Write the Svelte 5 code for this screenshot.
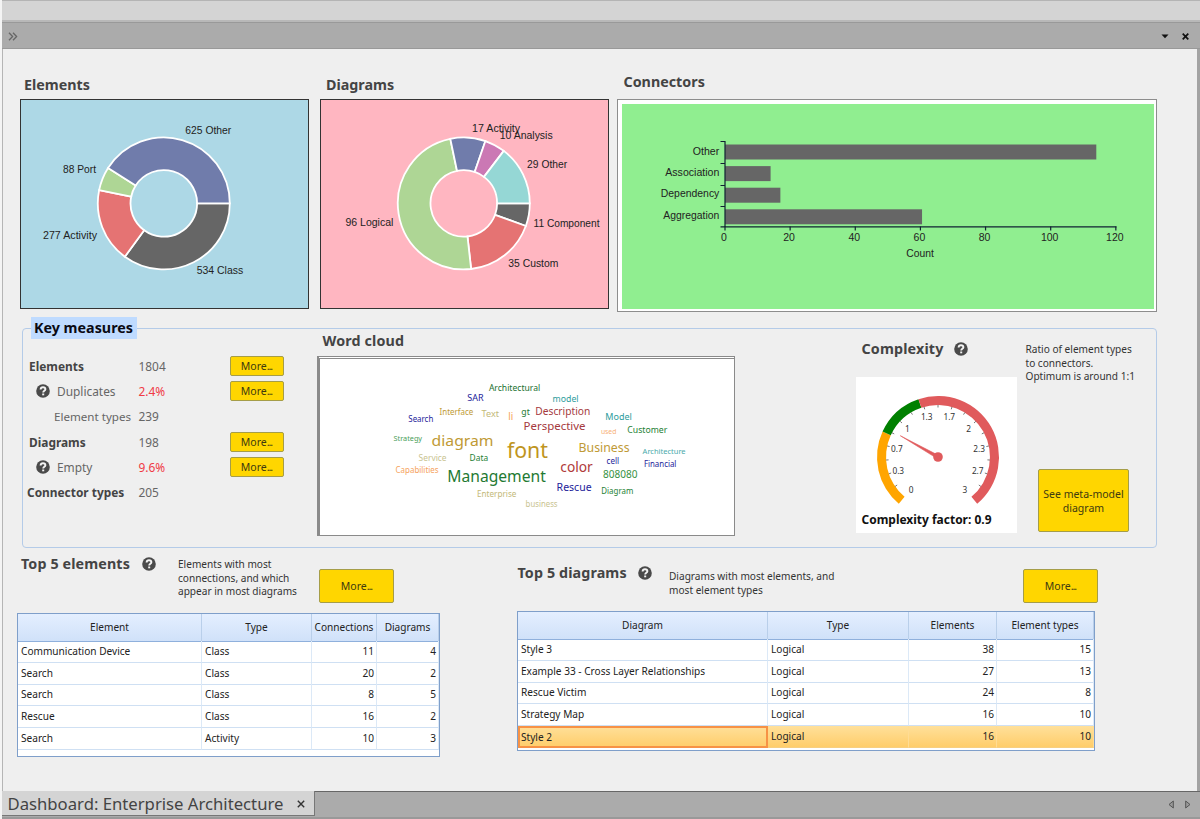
<script lang="ts">
  interface Slice {
    label: string;
    value: number;
    color: string;
    x: number;
    y: number;
    w: number;
  }

  const elementSlices: Slice[] = [
    { label: "Class", value: 534, color: "#666666", x: 175.7, y: 173.7, w: 46.5 },
    { label: "Activity", value: 277, color: "#e57373", x: 22, y: 139, w: 54 },
    { label: "Port", value: 88, color: "#aed695", x: 42, y: 73, w: 33 },
    { label: "Other", value: 625, color: "#707cab", x: 164.3, y: 34.3, w: 46 },
  ];

  const diagramSlices: Slice[] = [
    { label: "Component", value: 11, color: "#666666", x: 212.5, y: 126.7, w: 66 },
    { label: "Custom", value: 35, color: "#e57373", x: 187.3, y: 167.3, w: 50 },
    { label: "Logical", value: 96, color: "#aed695", x: 24.4, y: 125.5, w: 48 },
    { label: "Activity", value: 17, color: "#707cab", x: 151.1, y: 31.5, w: 48 },
    { label: "Analysis", value: 10, color: "#cb78b4", x: 178.7, y: 39.3, w: 53 },
    { label: "Other", value: 29, color: "#95d7d5", x: 206.1, y: 68.3, w: 40 },
  ];

  const connectors = [
    { label: "Other", value: 114, w: 26.5 },
    { label: "Association", value: 14, w: 54 },
    { label: "Dependency", value: 17, w: 58.5 },
    { label: "Aggregation", value: 60.5, w: 56 },
  ];

  const measures = [
    { name: "Elements", value: "1804", kind: "main", more: true },
    { name: "Duplicates", value: "2.4%", kind: "hinted", more: true },
    { name: "Element types", value: "239", kind: "sub", more: false },
    { name: "Diagrams", value: "198", kind: "main", more: true },
    { name: "Empty", value: "9.6%", kind: "hinted", more: true },
    { name: "Connector types", value: "205", kind: "main last", more: false },
  ];

  // text, x, baseline, width, size, color
  const words: [string, number, number, number, number, string][] = [
    ["Architectural", 169.3, 31.7, 51.3, 8.5, "#1b7030"],
    ["SAR", 147.7, 42.3, 16.3, 8.7, "#23239a"],
    ["model", 233, 42.7, 26, 8.7, "#2c9c9c"],
    ["Search", 88.7, 62.7, 25, 8.5, "#23239a"],
    ["Interface", 120, 55.7, 33.7, 8.2, "#c09a35"],
    ["Text", 162, 58.3, 17.5, 9.5, "#c3b978"],
    ["li", 188.7, 61.3, 5, 10, "#f6a25c"],
    ["gt", 201.7, 55.5, 8.5, 9, "#1f7a33"],
    ["Description", 215.7, 56.3, 55, 10.3, "#a53a40"],
    ["Perspective", 204, 70.7, 62, 11.2, "#a53a40"],
    ["Model", 285.7, 60.7, 26.5, 9, "#2c9c9c"],
    ["used", 281.3, 74.5, 15.5, 7.4, "#f7b078"],
    ["Customer", 307.7, 74.3, 40, 9, "#257f35"],
    ["Strategy", 74, 82, 28.5, 7.4, "#4aa05a"],
    ["diagram", 112, 87.3, 62, 15.3, "#c09a35"],
    ["font", 187.3, 98.7, 41, 21, "#bf9522"],
    ["Business", 259, 93.3, 51, 13.4, "#c09a35"],
    ["Architecture", 323, 94.7, 43, 7.6, "#48aaaa"],
    ["Service", 99, 102.3, 28, 8.5, "#c9c390"],
    ["Data", 150, 101.7, 18.5, 8.5, "#257f35"],
    ["color", 240.7, 112.7, 32.5, 13.6, "#b03a3a"],
    ["cell", 287, 105.3, 12.5, 8.4, "#23239a"],
    ["Financial", 324.3, 107.7, 32.5, 8.6, "#23239a"],
    ["Capabilities", 76, 114.3, 43, 8.5, "#f6a25c"],
    ["Management", 127.7, 123.3, 98.5, 16.8, "#1f7a33"],
    ["808080", 283.3, 119.3, 34.5, 10.2, "#36913f"],
    ["Rescue", 237, 132, 35, 11, "#23239a"],
    ["Diagram", 281.7, 134.7, 32, 8.5, "#257f35"],
    ["Enterprise", 157.3, 138, 39.5, 8.5, "#c3b978"],
    ["business", 206, 147.7, 32, 8.5, "#c9c390"],
  ];

  const topElements = [
    ["Communication Device", "Class", 11, 4],
    ["Search", "Class", 20, 2],
    ["Search", "Class", 8, 5],
    ["Rescue", "Class", 16, 2],
    ["Search", "Activity", 10, 3],
  ];

  const topDiagrams = [
    ["Style 3", "Logical", 38, 15],
    ["Example 33 - Cross Layer Relationships", "Logical", 27, 13],
    ["Rescue Victim", "Logical", 24, 8],
    ["Strategy Map", "Logical", 16, 10],
    ["Style 2", "Logical", 16, 10],
  ];

  const gaugeLabels = ["0", "0.3", "0.7", "1", "1.3", "1.7", "2", "2.3", "2.7", "3"];
  const gaugeTicks = Array.from({ length: 17 }, (_, i) => gaugeAngle((i + 1) / 6));

  // degrees run clockwise from three o'clock
  function point(cx: number, cy: number, r: number, deg: number) {
    const a = (deg * Math.PI) / 180;
    return { x: cx + r * Math.cos(a), y: cy + r * Math.sin(a) };
  }

  function ring(cx: number, cy: number, r1: number, r2: number, from: number, to: number) {
    const a = point(cx, cy, r2, from);
    const b = point(cx, cy, r2, to);
    const c = point(cx, cy, r1, to);
    const d = point(cx, cy, r1, from);
    const large = to - from > 180 ? 1 : 0;
    return `M${a.x} ${a.y}A${r2} ${r2} 0 ${large} 1 ${b.x} ${b.y}L${c.x} ${c.y}A${r1} ${r1} 0 ${large} 0 ${d.x} ${d.y}Z`;
  }

  function donut(slices: Slice[]) {
    const total = slices.reduce((sum, s) => sum + s.value, 0);
    let start = 0;
    return slices.map((s) => {
      const end = start + (s.value / total) * 360;
      const d = ring(142.8, 103.4, 33.3, 66, start, end);
      start = end;
      return { ...s, d };
    });
  }

  function gaugeAngle(value: number) {
    return 130 + (value / 3) * 280;
  }
</script>

{#snippet help()}
  <svg class="help" viewBox="0 0 14 14">
    <circle cx="7" cy="7" r="6.8" fill="#4a4a4a" />
    <path d="M4.6 5.5C4.7 3.9 5.7 3.2 7 3.2c1.5 0 2.4.8 2.4 2 0 1.6-2.2 1.6-2.2 3.3" fill="none" stroke="#f4f4f4" stroke-width="1.9" />
    <rect x="6.2" y="9.5" width="2" height="1.8" fill="#f4f4f4" />
  </svg>
{/snippet}

{#snippet donutChart(slices: Slice[])}
  <svg class="chart" viewBox="0 0 287 208">
    {#each donut(slices) as s}
      <path d={s.d} fill={s.color} stroke="#fff" stroke-width="1.8" />
    {/each}
    {#each slices as s}
      <text x={s.x} y={s.y} textLength={s.w} lengthAdjust="spacingAndGlyphs">{s.value} {s.label}</text>
    {/each}
  </svg>
{/snippet}

{#snippet table(heads: string[], rows: (string | number)[][], kind: string, selected: number)}
  <div class="table {kind}">
    <div class="row head">
      {#each heads as h}<span>{h}</span>{/each}
    </div>
    {#each rows as row, i}
      <div class="row" class:selected={i === selected}>
        {#each row as cell}
          <span class:num={typeof cell === "number"}>{cell}</span>
        {/each}
      </div>
    {/each}
  </div>
{/snippet}

<div class="window">
  <div class="strip"></div>
  <header>
    <svg class="chevrons" width="10" height="9" viewBox="0 0 10 9">
      <path d="M1 .7 4.6 4.5 1 8.3M5 .7 8.6 4.5 5 8.3" fill="none" stroke="#666" stroke-width="1.3" />
    </svg>
    <svg width="8" height="5" viewBox="0 0 8 5"><path d="M.5.5h7L4 4.3z" fill="#111" /></svg>
    <svg width="7" height="7" viewBox="0 0 7 7"><path d="M.7.7 6.3 6.3M6.3.7.7 6.3" stroke="#111" stroke-width="1.7" /></svg>
  </header>

  <main>
    <div class="charts">
      <section>
        <h2>Elements</h2>
        <div class="panel blue">{@render donutChart(elementSlices)}</div>
      </section>
      <section>
        <h2>Diagrams</h2>
        <div class="panel pink">{@render donutChart(diagramSlices)}</div>
      </section>
      <section class="connectors">
        <h2>Connectors</h2>
        <div class="panel framed">
          <svg class="chart green" viewBox="0 0 532 205">
            {#each connectors as c, i}
              <rect x="103" y={40.5 + i * 21.6} width={c.value * 3.257} height="15" fill="#666" />
              <text x={97.3 - c.w} y={50.5 + i * 21.4} textLength={c.w} lengthAdjust="spacingAndGlyphs">{c.label}</text>
            {/each}
            <path d="M98.5 37.5h4.5V123.5M98.5 59.5h4.5M98.5 81.5h4.5M98.5 102.5h4.5M98.5 122.8H494.5" class="axis" />
            {#each [0, 20, 40, 60, 80, 100, 120] as t}
              <path d="M{103 + t * 3.257} 122.5v4" class="axis" />
              <text x={102 + t * 3.257} y="137" text-anchor="middle" class="tick">{t}</text>
            {/each}
            <text x="284.3" y="153.3" textLength="27.5" lengthAdjust="spacingAndGlyphs">Count</text>
          </svg>
        </div>
      </section>
    </div>

    <div class="key">
      <h2 class="legend">Key measures</h2>
      <div class="measures">
        {#each measures as m}
          <div class="measure {m.kind}">
            <span class="name">
              {#if m.kind === "hinted"}{@render help()}{/if}
              {m.name}
            </span>
            <span class="value">{m.value}</span>
            {#if m.more}<button>More<i>...</i></button>{/if}
          </div>
        {/each}
      </div>

      <div class="cloud">
        <h2>Word cloud</h2>
        <svg viewBox="0 0 414 176">
          {#each words as [text, x, y, w, size, color]}
            <text x={x - 0.4} {y} textLength={w} lengthAdjust="spacingAndGlyphs" font-size={size} fill={color}>{text}</text>
          {/each}
        </svg>
      </div>

      <div class="complexity">
        <h2>Complexity {@render help()}</h2>
        <div class="gauge">
          <svg viewBox="0 0 161 156">
            <path d={ring(82, 80, 52, 61, gaugeAngle(0), gaugeAngle(0.8))} fill="#ffa500" />
            <path d={ring(82, 80, 52, 61, gaugeAngle(0.8), gaugeAngle(1.3))} fill="#008000" />
            <path d={ring(82, 80, 52, 61, gaugeAngle(1.3), gaugeAngle(3))} fill="#e05a5c" />
            {#each gaugeTicks as deg}
              {@const a = point(82, 80, 52, deg)}
              {@const b = point(82, 80, 49.5, deg)}
              <line x1={a.x} y1={a.y} x2={b.x} y2={b.y} stroke="#555" stroke-width="0.8" />
            {/each}
            {#each gaugeLabels as label, i}
              {@const p = point(82, 80, 42, gaugeAngle(i / 3))}
              <text x={p.x} y={p.y + 3.4} text-anchor="middle">{label}</text>
            {/each}
            <path d="M44.3 58.7 82.9 78.6 81.3 81.6z" fill="#e05a5c" stroke="#e05a5c" stroke-width="0.6" />
            <circle cx="82" cy="80" r="4.8" fill="#e05a5c" />
            <text x="5.5" y="146.5" class="factor" textLength="130" lengthAdjust="spacingAndGlyphs">Complexity factor: 0.9</text>
          </svg>
        </div>
      </div>

      <div class="side">
        <p>Ratio of element types<br />to connectors.<br />Optimum is around 1:1</p>
        <button>See meta-model<br />diagram</button>
      </div>
    </div>

    <div class="tops">
      <section class="top-elements">
        <div class="caption">
          <h2>Top 5 elements {@render help()}</h2>
          <p>Elements with most<br />connections, and which<br />appear in most diagrams</p>
          <button>More<i>...</i></button>
        </div>
        {@render table(["Element", "Type", "Connections", "Diagrams"], topElements, "elements", -1)}
      </section>
      <section class="top-diagrams">
        <div class="caption">
          <h2>Top 5 diagrams {@render help()}</h2>
          <p>Diagrams with most elements, and<br />most element types</p>
          <button>More<i>...</i></button>
        </div>
        {@render table(["Diagram", "Type", "Elements", "Element types"], topDiagrams, "diagrams", 4)}
      </section>
    </div>
  </main>

  <footer>
    <div class="tab">
      <span>Dashboard: Enterprise Architecture</span>
      <svg width="8" height="8" viewBox="0 0 8 8"><path d="M.8.8 7.2 7.2M7.2.8.8 7.2" stroke="#333" stroke-width="1.4" /></svg>
    </div>
    <div class="arrows">
      <svg width="6" height="9" viewBox="0 0 6 9"><path d="M5.3 1v7L1 4.5z" fill="#999" stroke="#555" /></svg>
      <svg width="6" height="9" viewBox="0 0 6 9"><path d="M.7 1v7L5 4.5z" fill="#999" stroke="#555" /></svg>
    </div>
  </footer>
</div>

<style>
  :global(body) {
    background: #efefef;
  }

  .window {
    display: flex;
    flex-direction: column;
    box-sizing: border-box;
    width: 1200px;
    height: 819px;
    overflow: hidden;
    padding-left: 2px;
    background: #f4f4f4;
    font-family: "Noto Sans", "Open Sans", sans-serif;
    color: #333;
  }

  .strip {
    box-sizing: border-box;
    height: 22px;
    border-top: 1px solid #b4b4b4;
    border-bottom: 2px solid #b8b8b8;
    background: #d4d4d4;
  }

  header {
    display: flex;
    align-items: center;
    gap: 13px;
    box-sizing: border-box;
    height: 27px;
    padding: 2px 11px 0 6px;
    border-top: 1px solid #999;
    border-bottom: 1px solid #999;
    background: #ababab;
  }

  .chevrons {
    margin-right: auto;
  }

  main {
    display: flex;
    flex-direction: column;
    box-sizing: border-box;
    height: 742px;
    border-left: 1px solid #b5b5b5;
    border-right: 3px solid #a3a3a3;
    background: #efefef;
  }

  h2 {
    margin: 0;
    font-size: 14.3px;
    line-height: 20px;
    font-weight: 700;
    color: #444;
    white-space: nowrap;
  }

  p {
    margin: 0;
    font-size: 10.1px;
    line-height: 13.7px;
    white-space: nowrap;
  }

  svg {
    display: block;
  }

  .help {
    flex: none;
    width: 14px;
    height: 14px;
  }

  button {
    box-sizing: border-box;
    padding: 0;
    border: 1px solid #a59d48;
    border-radius: 2px;
    background: #ffd600;
    color: #403a10;
    font: 10.5px/14px "Noto Sans", sans-serif;
  }

  button i {
    font-style: normal;
    letter-spacing: -1px;
  }

  /* charts */
  .charts {
    display: flex;
    box-sizing: border-box;
    height: 268px;
    padding: 26px 0 0 17px;
  }

  .charts section {
    width: 300px;
  }

  .charts h2 {
    height: 24px;
    padding-left: 4px;
  }

  .charts section:nth-child(2) h2 {
    padding-left: 6px;
  }

  .charts .connectors {
    width: 540px;
    margin: -3px 0 0 -3px;
  }

  .charts .connectors h2 {
    height: 27px;
    padding-left: 6.5px;
  }

  .panel {
    box-sizing: border-box;
    width: 289px;
    height: 210px;
    border: 1px solid #333;
  }

  .blue {
    background: #add8e6;
  }

  .pink {
    background: #ffb6c1;
  }

  .framed {
    width: 540px;
    height: 213px;
    padding: 4px 2px 2px 4px;
    border-color: #8d8d8d;
    background: #fff;
  }

  .chart {
    width: 100%;
    height: 100%;
    font: 10.7px "Liberation Sans", Arial, sans-serif;
    fill: #222;
  }

  .green {
    background: #90ee90;
  }

  .axis {
    fill: none;
    stroke: #123;
    stroke-width: 1.2;
  }

  .tick {
    font-size: 10.5px;
  }

  /* key measures */
  .key {
    display: flex;
    position: relative;
    box-sizing: border-box;
    width: 1135px;
    height: 220px;
    margin: 11px 0 0 19px;
    border: 1px solid #b4cbe8;
    border-radius: 4px;
  }

  .legend {
    position: absolute;
    left: 8px;
    top: -12px;
    box-sizing: border-box;
    width: 106px;
    height: 22px;
    padding: 1px 3px;
    background: #bfdbff;
    color: #0a0a14;
  }

  .measures {
    width: 294px;
    padding-top: 24px;
  }

  .measure {
    display: flex;
    align-items: center;
    height: 25.3px;
    font-size: 11.9px;
    color: #666;
  }

  .name {
    display: flex;
    align-items: center;
    gap: 7px;
    box-sizing: border-box;
    width: 109.5px;
    padding-left: 6px;
    white-space: nowrap;
  }

  .main .name {
    font-weight: 700;
    color: #444;
  }

  .last .name {
    padding-left: 4px;
  }

  .hinted .name {
    padding-left: 13px;
  }

  .sub .name {
    padding-left: 31px;
    font-size: 11.6px;
  }

  .value {
    width: 97px;
    padding-left: 6px;
    box-sizing: border-box;
  }

  .hinted .value {
    color: #f03a45;
  }

  .measure button {
    width: 54px;
    height: 20px;
    margin-top: 1px;
  }

  .cloud h2 {
    padding: 2px 0 0 5.5px;
    height: 25px;
    letter-spacing: 0.15px;
  }

  .cloud svg {
    box-sizing: content-box;
    width: 414px;
    height: 176px;
    border: 1px solid #8a8a8a;
    border-width: 3px 1px 1px 3px;
    border-top-style: double;
    background: #fff;
  }

  .complexity {
    width: 161px;
    margin-left: 120.5px;
  }

  .complexity h2 {
    display: flex;
    align-items: flex-start;
    gap: 10px;
    height: 38px;
    padding: 10px 0 0 6px;
    letter-spacing: 0.15px;
  }

  .complexity h2 :global(svg) {
    margin-top: 3px;
  }

  .gauge {
    height: 156px;
    background: #fff;
    font-size: 8.3px;
    fill: #333;
  }

  .factor {
    font-size: 11.8px;
    font-weight: 700;
    fill: #111;
  }

  .side {
    padding: 14px 0 0 9px;
  }

  .side button {
    width: 91px;
    height: 63px;
    margin: 85px 0 0 12.5px;
    white-space: nowrap;
    font-size: 10.5px;
  }

  /* tables */
  .tops {
    display: flex;
    padding-left: 14px;
  }

  .top-elements {
    width: 500px;
  }

  .caption {
    display: flex;
    height: 65px;
  }

  .caption h2 {
    display: flex;
    align-items: center;
    justify-content: space-between;
    box-sizing: border-box;
    width: 135px;
    height: 20px;
    margin: 6px 0 0 4px;
    letter-spacing: 0.12px;
  }

  .caption p {
    width: 141px;
    padding: 10px 0 0 22px;
    box-sizing: border-box;
    width: 163px;
  }

  .caption button {
    width: 75px;
    height: 34px;
    margin-top: 21px;
  }

  .top-diagrams .caption {
    height: 63px;
  }

  .top-diagrams .caption h2 {
    width: 134.5px;
    margin: 15px 0 0 0.5px;
  }

  .top-diagrams .caption p {
    width: 371px;
    padding: 22px 0 0 17px;
  }

  .table {
    box-sizing: border-box;
    border: 1px solid #7f9fca;
    background: #fff;
    font-size: 10.1px;
    color: #222;
  }

  .table.elements {
    width: 423px;
    height: 144px;
    --cols: 184px 110px 65px 62px;
  }

  .table.diagrams {
    width: 578px;
    height: 140px;
    --cols: 250px 141px 88px 97px;
  }

  .row {
    display: grid;
    grid-template-columns: var(--cols);
    height: 21.7px;
    line-height: 21px;
  }

  .row span {
    box-sizing: border-box;
    padding: 0 3px;
    border-right: 1px solid #dce9f7;
    border-bottom: 1px solid #cfe0f3;
    white-space: nowrap;
  }

  .row .num {
    padding-right: 2px;
    text-align: right;
  }

  .head {
    height: 27px;
    line-height: 27px;
    background: linear-gradient(#e4efff, #d0e1f9);
  }

  .head span {
    padding: 0;
    border-right-color: #b9cfea;
    border-bottom-color: #8fb0dc;
    text-align: center;
  }

  .selected {
    background: linear-gradient(#ffe09a, #ffcd6a);
  }

  .selected span {
    border-bottom-color: #f7cf80;
    border-right-color: #ffdc94;
  }

  .selected span:first-child {
    border: 2px solid #f79245;
    padding-left: 1px;
    line-height: 18px;
  }

  /* tab bar */
  footer {
    display: flex;
    box-sizing: border-box;
    height: 28px;
    border-top: 1px solid #666;
    border-bottom: 2px solid #999;
    background: #ababab;
  }

  .tab {
    display: flex;
    align-items: center;
    gap: 14px;
    box-sizing: border-box;
    width: 313px;
    height: 25px;
    margin-top: -1px;
    padding: 1px 0 0 5.5px;
    border-right: 1px solid #777;
    border-bottom: 1px solid #777;
    background: #d4d4d4;
    font-size: 16.7px;
    white-space: nowrap;
    color: #444;
  }

  .arrows {
    display: flex;
    align-items: center;
    gap: 11px;
    margin-left: auto;
    padding-right: 9px;
  }
</style>
